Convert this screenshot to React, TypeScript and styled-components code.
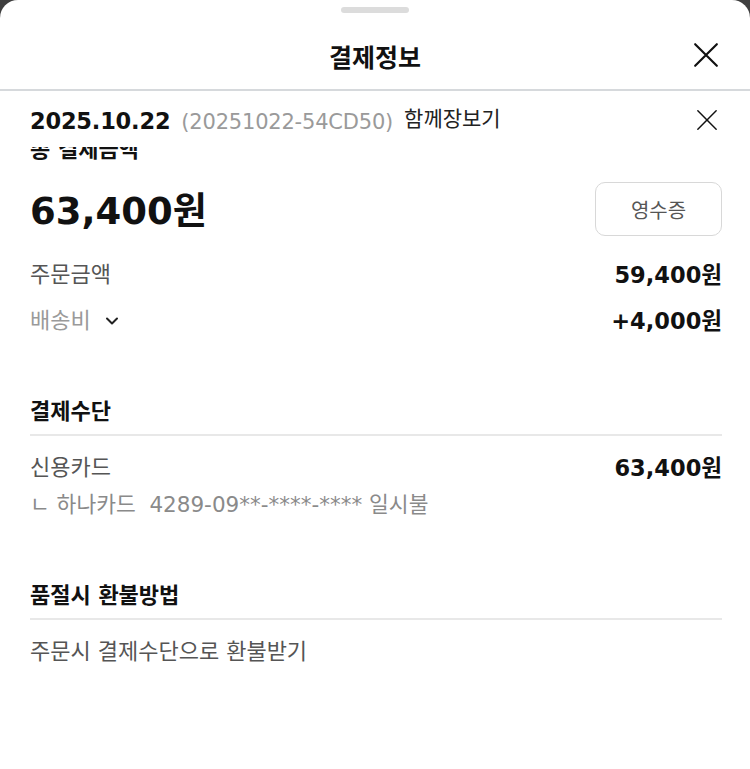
import styled, { createGlobalStyle } from "styled-components";

const GlobalStyle = createGlobalStyle`
  html, body {
    margin: 0;
    padding: 0;
    background: #3f3f3f;
  }
  body {
    font-family: "DejaVu Sans", "Noto Sans CJK KR", sans-serif;
    color: #111;
  }
`;

const CloseIcon = ({ size, stroke }: { size: number; stroke: number }) => (
  <svg width={size} height={size} viewBox="0 0 24 24" fill="none">
    <path
      d="M2 2L22 22M22 2L2 22"
      stroke="#111"
      strokeWidth={stroke}
      strokeLinecap="round"
    />
  </svg>
);

const ChevronIcon = () => (
  <svg width="14" height="10" viewBox="0 0 14 10" fill="none">
    <path
      d="M2 2.5L7 7.5L12 2.5"
      stroke="#222"
      strokeWidth="2"
      strokeLinecap="round"
      strokeLinejoin="round"
    />
  </svg>
);

export default function App() {
  return (
    <>
      <GlobalStyle />
      <Sheet>
        <Handle />
        <Header>
          <Title>결제정보</Title>
          <HeaderClose aria-label="닫기">
            <CloseIcon size={26} stroke={2} />
          </HeaderClose>
        </Header>

        <OrderBar>
          <OrderInfo>
            <OrderDate>2025.10.22</OrderDate>
            <OrderNo>(20251022-54CD50)</OrderNo>
            <OrderTag>함께장보기</OrderTag>
          </OrderInfo>
          <OrderClose aria-label="닫기">
            <CloseIcon size={22} stroke={1.6} />
          </OrderClose>
        </OrderBar>

        <Content>
          {/* scrolled under the order bar, only its lower edge shows */}
          <TotalLabel>총 결제금액</TotalLabel>
          <TotalRow>
            <TotalAmount>63,400원</TotalAmount>
            <ReceiptButton>영수증</ReceiptButton>
          </TotalRow>

          <Row>
            <Label>주문금액</Label>
            <Value>59,400원</Value>
          </Row>
          <Row $gap={18}>
            <Label $muted>
              배송비 <ChevronIcon />
            </Label>
            <Value>+4,000원</Value>
          </Row>

          <Section>
            <SectionTitle>결제수단</SectionTitle>
            <Row $gap={18}>
              <Label>신용카드</Label>
              <Value>63,400원</Value>
            </Row>
            <SubLine>ㄴ 하나카드&nbsp;&nbsp;4289-09**-****-**** 일시불</SubLine>
          </Section>

          <Section>
            <SectionTitle>품절시 환불방법</SectionTitle>
            <Row $gap={18}>
              <Label>주문시 결제수단으로 환불받기</Label>
            </Row>
          </Section>
        </Content>
      </Sheet>
    </>
  );
}

const Sheet = styled.div`
  min-height: 100vh;
  background: #fff;
  border-radius: 18px 18px 0 0;
  overflow: hidden;
  display: flex;
  flex-direction: column;
`;

const Handle = styled.div`
  width: 68px;
  height: 6px;
  margin: 7px auto 0;
  border-radius: 3px;
  background: #dcdcdc;
`;

const Header = styled.div`
  position: relative;
  height: 76px;
  display: flex;
  align-items: center;
  justify-content: center;
  border-bottom: 2px solid #d6d9dc;
`;

const Title = styled.h1`
  margin: 0;
  margin-top: 10px;
  font-size: 25px;
  font-weight: 700;
`;

const HeaderClose = styled.button`
  position: absolute;
  right: 31px;
  top: 29px;
  padding: 0;
  border: none;
  background: none;
  display: flex;
  cursor: pointer;
`;

const OrderBar = styled.div`
  position: relative;
  z-index: 1;
  height: 56px;
  padding: 2px 32px 0 30px;
  box-sizing: border-box;
  display: flex;
  align-items: center;
  justify-content: space-between;
  background: #fff;
`;

const OrderInfo = styled.div`
  display: flex;
  align-items: baseline;
  gap: 11px;
`;

const OrderDate = styled.span`
  font-size: 22.5px;
  font-weight: 700;
  letter-spacing: -0.2px;
`;

const OrderNo = styled.span`
  font-size: 21px;
  color: #9a9a9a;
  letter-spacing: -0.2px;
`;

const OrderTag = styled.span`
  font-size: 21px;
  color: #222;
  position: relative;
  top: -3px;
`;

const OrderClose = styled.button`
  padding: 0;
  border: none;
  background: none;
  display: flex;
  cursor: pointer;
`;

const Content = styled.div`
  margin-top: -10px;
  padding: 0 28px 40px 30px;
  display: flex;
  flex-direction: column;
`;

const TotalLabel = styled.div`
  font-size: 22px;
  font-weight: 700;
  line-height: 26px;
`;

const TotalRow = styled.div`
  margin-top: 19px;
  display: flex;
  align-items: center;
  justify-content: space-between;
`;

const TotalAmount = styled.div`
  padding-top: 5px;
  font-size: 37px;
  font-weight: 700;
  line-height: 48px;
`;

const ReceiptButton = styled.button`
  width: 127px;
  height: 54px;
  border: 1px solid #d8d8d8;
  border-radius: 10px;
  background: #fff;
  font-family: inherit;
  font-size: 20px;
  color: #555;
  cursor: pointer;
`;

const Row = styled.div<{ $gap?: number }>`
  margin-top: ${({ $gap }) => $gap ?? 25}px;
  display: flex;
  align-items: center;
  justify-content: space-between;
  line-height: 28px;
`;

const Label = styled.span<{ $muted?: boolean }>`
  display: inline-flex;
  align-items: center;
  gap: 14px;
  font-size: 22px;
  color: ${({ $muted }) => ($muted ? "#9a9a9a" : "#555")};
`;

const Value = styled.span`
  font-size: 22.5px;
  font-weight: 700;
  color: #111;
`;

const Section = styled.section`
  margin-top: 64px;
  display: flex;
  flex-direction: column;
`;

const SectionTitle = styled.h2`
  margin: 0;
  padding-bottom: 9px;
  border-bottom: 2px solid #e8e8e8;
  font-size: 22px;
  font-weight: 700;
  line-height: 26px;
`;

const SubLine = styled.div`
  margin-top: 9px;
  font-size: 21.5px;
  line-height: 28px;
  color: #8a8a8a;
`;
